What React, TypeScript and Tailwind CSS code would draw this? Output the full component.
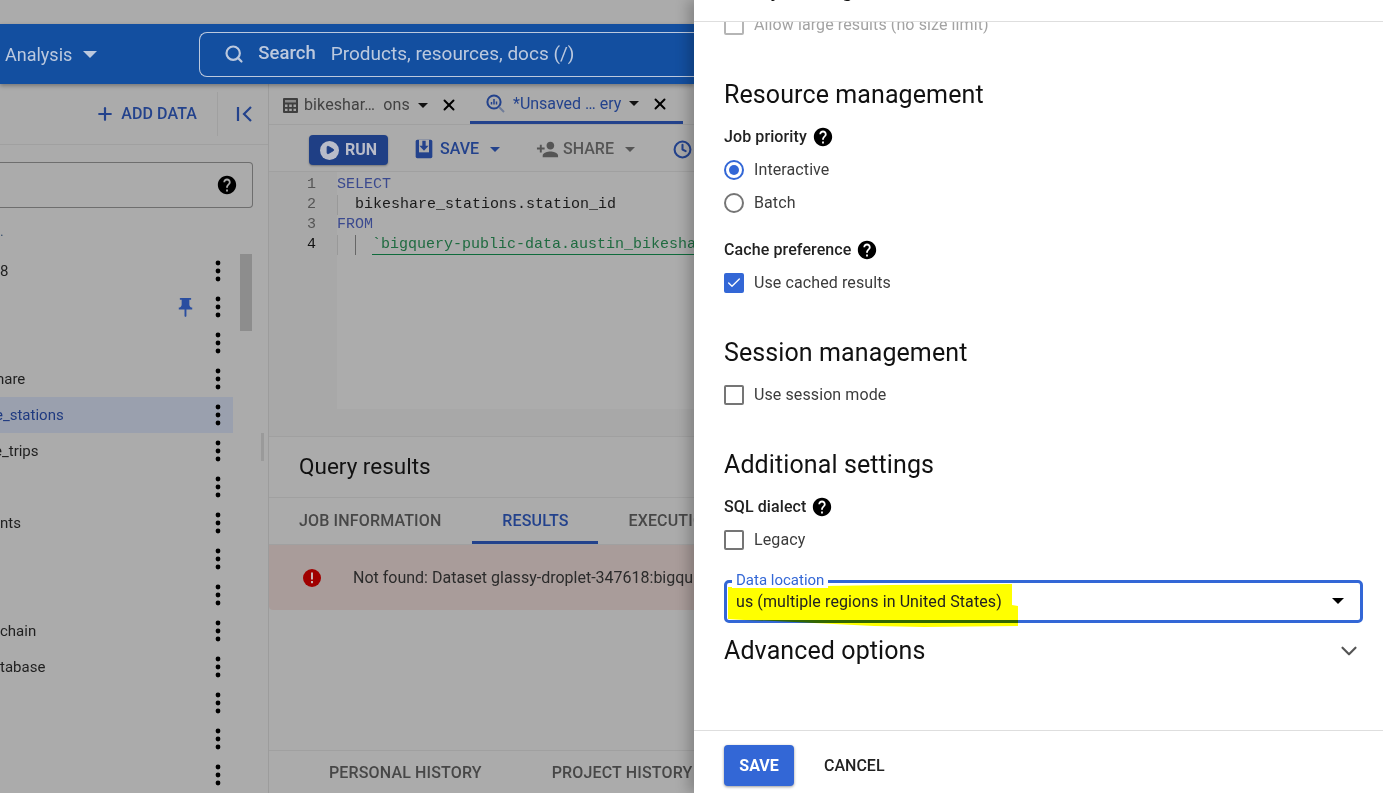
import { ChevronDown, Search, Plus, Play, Clock, X, Check } from 'lucide-react'

function HelpIcon({ size = 22 }: { size?: number }) {
  return (
    <svg width={size} height={size} viewBox="0 0 24 24" fill="#000" className="shrink-0">
      <path d="M12 2C6.48 2 2 6.48 2 12s4.48 10 10 10 10-4.48 10-10S17.52 2 12 2zm1 17h-2v-2h2v2zm2.07-7.75l-.9.92C13.45 12.9 13 13.5 13 15h-2v-.5c0-1.1.45-2.1 1.17-2.83l1.24-1.26c.37-.36.59-.86.59-1.41 0-1.1-.9-2-2-2s-2 .9-2 2H8c0-2.21 1.79-4 4-4s4 1.79 4 4c0 .88-.36 1.68-.93 2.25z" />
    </svg>
  )
}

function Dots() {
  return (
    <svg width="24" height="24" viewBox="0 0 24 24" fill="#000" className="shrink-0 mr-[3px]">
      <circle cx="12" cy="4" r="2.4" />
      <circle cx="12" cy="12" r="2.4" />
      <circle cx="12" cy="20" r="2.4" />
    </svg>
  )
}

function Caret({ className }: { className: string }) {
  return <span className={`inline-block w-0 h-0 border-x-[5px] border-x-transparent border-t-[5px] ${className}`} />
}

const sideRows = [
  { text: '8' },
  { text: '', pin: true },
  { text: '' },
  { text: 'hare', cut: '-ml-[4px]' },
  { text: 'e_stations', active: true, cut: '-ml-[5px]' },
  { text: 'e_trips', cut: '-ml-[6px]' },
  { text: '' },
  { text: 'nts' },
  { text: '' },
  { text: '' },
  { text: 'chain' },
  { text: 'tabase' },
  { text: '' },
  { text: '' },
  { text: '' },
]

function Sidebar() {
  return (
    <div className="w-[269px] shrink-0 flex flex-col border-r border-[#9c9c9c] overflow-hidden">
      <div className="h-[61px] shrink-0 flex items-center justify-end border-b border-[#a0a0a0]">
        <div className="flex items-center gap-[6px] text-[#23428c] text-[16px] font-medium mr-[20px] tracking-[0.1px]">
          <Plus size={20} strokeWidth={2.6} />
          <span>ADD DATA</span>
        </div>
        <div className="h-[44px] border-l border-[#a0a0a0] flex items-center pl-[17px] pr-[13px] text-[#23428c]">
          <svg width="20" height="20" viewBox="0 0 20 20" fill="none" stroke="currentColor" strokeWidth="2.2">
            <path d="M3 3v14M16 3l-7 7 7 7" />
          </svg>
        </div>
      </div>
      <div className="mt-[17px] h-[46px] w-[253px] shrink-0 border border-l-0 border-[#6e6e6e] rounded-r-[4px] flex items-center justify-end pr-[14px]">
        <HelpIcon />
      </div>
      <div className="h-[46px] shrink-0 text-[14px] text-[#3c5470] leading-[46px]">.</div>
      <div className="flex relative -mt-[1px]">
        <div className="w-[233px] shrink-0">
          {sideRows.map((r, i) => (
            <div key={i} className={`h-[36px] flex items-center overflow-hidden ${r.active ? 'bg-[#9aa0ae] text-[#1f3a80]' : 'text-[#1f1f1f]'}`}>
              <span className={`text-[15px] flex-1 ${r.cut ?? ''}`}>{r.text}</span>
              {r.pin && (
                <svg width="23" height="23" viewBox="0 0 24 24" fill="#2a4ea0" className="shrink-0 mr-[9px]">
                  <path d="M16 9V4h1c.55 0 1-.45 1-1s-.45-1-1-1H7c-.55 0-1 .45-1 1s.45 1 1 1h1v5c0 1.66-1.34 3-3 3v2h5.97v7l1 1 1-1v-7H19v-2c-1.66 0-3-1.34-3-3z" />
                </svg>
              )}
              <Dots />
            </div>
          ))}
        </div>
        <div className="w-[28px] shrink-0">
          <div className="ml-[7px] mt-[1px] w-[12px] h-[77px] bg-[#8d8d8d]" />
        </div>
        <div className="w-[7px] relative">
          <div className="absolute left-0 top-[180px] w-[3px] h-[28px] bg-[#9a9a9a]" />
        </div>
      </div>
    </div>
  )
}

function TabTableIcon() {
  return (
    <svg width="15" height="15" viewBox="0 0 15 15" className="shrink-0">
      <rect width="15" height="15" rx="1" fill="#3f3f3f" />
      <rect x="2" y="2" width="11" height="2.5" fill="#8a8a8a" />
      <path d="M2 6.5h2.5V9H2zM6.2 6.5h2.6V9H6.2zM10.5 6.5H13V9h-2.5zM2 10.7h2.5v2.3H2zM6.2 10.7h2.6v2.3H6.2zM10.5 10.7H13v2.3h-2.5z" fill="#a5a5a5" />
    </svg>
  )
}

function TabQueryIcon() {
  return (
    <svg width="19" height="19" viewBox="0 0 19 19" fill="none" className="shrink-0">
      <circle cx="8" cy="8" r="6.6" stroke="#23428c" strokeWidth="2" />
      <path d="M5.5 8v2.5M8 5v5.5M10.5 7.5v3" stroke="#23428c" strokeWidth="1.5" />
      <path d="M13 13l5 5" stroke="#6f7c99" strokeWidth="2" />
    </svg>
  )
}

function CodeLine({ n, children, strong }: { n: number; children: React.ReactNode; strong?: boolean }) {
  return (
    <div className="flex h-[20px]">
      <span className={`w-[49px] pr-[2px] shrink-0 text-right ${strong ? 'text-[#111]' : 'text-[#555]'}`}>{n}</span>
      <span className="ml-[19px] flex">{children}</span>
    </div>
  )
}

function MainPane() {
  return (
    <div className="flex-1 flex flex-col min-w-0 overflow-hidden">
      <div className="h-[41px] shrink-0 flex items-stretch border-b border-[#a0a0a0] whitespace-nowrap">
        <div className="w-[201px] shrink-0 flex items-center pl-[14px] pt-[2px] text-[#424242]">
          <TabTableIcon />
          <span className="ml-[6px] text-[16px] tracking-[0.1px]">bikeshar…&nbsp; ons</span>
          <Caret className="border-t-[#111] ml-[8px]" />
          <X size={18} strokeWidth={2.6} className="text-black ml-[12px]" />
        </div>
        <div className="w-[213px] shrink-0 flex items-center pl-[16px] pt-[2px] text-[#23428c] border-b-[3px] border-[#23428c]">
          <TabQueryIcon />
          <span className="ml-[8px] text-[16px]">*Unsaved … ery</span>
          <Caret className="border-t-[#111] ml-[8px]" />
          <X size={18} strokeWidth={2.6} className="text-black ml-[12px]" />
        </div>
      </div>
      <div className="h-[47px] shrink-0 flex items-center border-b border-[#a0a0a0] pl-[40px] pt-[2px] whitespace-nowrap text-[16px] font-medium">
        <div className="mt-[2px] h-[30px] w-[79px] rounded-[4px] bg-[#1f3f85] text-[#b9bcc9] flex items-center justify-center gap-[6px] font-bold shadow-[0_1px_2px_rgba(0,0,0,0.3)]">
          <span className="w-[19px] h-[19px] rounded-full bg-[#b9bcc9] flex items-center justify-center">
            <Play size={10} fill="#1f3f85" className="text-[#1f3f85] ml-[1px]" />
          </span>
          RUN
        </div>
        <svg width="20" height="20" viewBox="0 0 24 24" className="ml-[26px] shrink-0">
          <rect x="2" y="1" width="20" height="22" rx="2" fill="#23428c" />
          <rect x="6" y="1" width="12" height="15" fill="#ababab" />
          <path d="M10 2h4v6h3.5L12 14 6.500 8H10z" fill="#23428c" />
        </svg>
        <span className="ml-[6px] text-[#23428c]">SAVE</span>
        <Caret className="border-t-[#23428c] ml-[11px]" />
        <svg width="23" height="23" viewBox="0 0 24 24" fill="#555" className="ml-[36px] shrink-0">
          <path d="M15 12c2.21 0 4-1.79 4-4s-1.79-4-4-4-4 1.790-4 4 1.790 4 4 4zm-9-2V7H4v3H1v2h3v3h2v-3h3v-2H6zm9 4c-2.670 0-8 1.340-8 4v2h16v-2c0-2.660-5.330-4-8-4z" />
        </svg>
        <span className="ml-[4px] text-[#555]">SHARE</span>
        <Caret className="border-t-[#555] ml-[11px]" />
        <Clock size={19} strokeWidth={2.6} className="text-[#23428c] ml-[38px] shrink-0" />
      </div>
      <div className="h-[264px] shrink-0 relative bg-[#a8a8a8] font-['Liberation_Mono',monospace] text-[15px] leading-[20px] pt-[3px] whitespace-nowrap overflow-hidden">
        <div className="absolute left-[68px] right-0 top-0 h-[237px] bg-[#acacac]" />
        <div className="relative">
          <CodeLine n={1}><span className="text-[#3b4a8f]">SELECT</span></CodeLine>
          <CodeLine n={2}><span className="border-l border-[#999] pl-[17px] text-[#1a1a1a]">bikeshare_stations.station_id</span></CodeLine>
          <CodeLine n={3}><span className="text-[#3b4a8f]">FROM</span></CodeLine>
          <CodeLine n={4} strong>
            <span className="border-l border-[#999] pl-[17px] flex">
              <span className="border-l border-[#666] pl-[16px] flex">
                <span className="border-b border-[#0f6b3c] text-[#1f6b40] h-[20px]">`bigquery-public-data.austin_bikeshare</span>
              </span>
            </span>
          </CodeLine>
        </div>
      </div>
      <div className="h-[61px] shrink-0 flex items-center pl-[30px] border-t border-[#a0a0a0] text-[22.500px] text-[#111]">Query results</div>
      <div className="h-[48px] shrink-0 flex border-t border-b border-[#a0a0a0] text-[16px] font-medium tracking-[0.150px] whitespace-nowrap">
        <div className="pl-[30px] flex items-center text-[#474747] shrink-0">JOB INFORMATION</div>
        <div className="ml-[31px] w-[126px] shrink-0 flex items-center justify-center pt-[3px] text-[#23428c] border-b-[3px] border-[#23428c]">RESULTS</div>
        <div className="ml-[30px] flex items-center text-[#474747] shrink-0">EXECUTION DETAILS</div>
      </div>
      <div className="h-[65px] shrink-0 bg-[#a99c9a] rounded-bl-[4px] flex items-center pl-[33px] whitespace-nowrap">
        <svg width="20" height="20" viewBox="0 0 20 20" className="shrink-0">
          <circle cx="10" cy="10" r="9" fill="#a00000" />
          <rect x="9" y="4.5" width="2" height="7" fill="#c9b5b5" />
          <rect x="9" y="13" width="2" height="2.2" fill="#c9b5b5" />
        </svg>
        <span className="ml-[31px] text-[16px] text-[#2b2b2b]">Not found: Dataset glassy-droplet-347618:bigquery-public-data</span>
      </div>
      <div className="h-[140px] shrink-0" />
      <div className="flex-1 border-t border-[#a0a0a0] flex items-center text-[16px] font-medium tracking-[0.150px] text-[#474747] whitespace-nowrap pl-[60px] pt-[2px]">
        <span className="shrink-0">PERSONAL HISTORY</span>
        <span className="ml-[70px] shrink-0">PROJECT HISTORY</span>
      </div>
    </div>
  )
}

function CheckBox({ label, checked, dim }: { label: string; checked?: boolean; dim?: boolean }) {
  return (
    <div className="flex items-center gap-[10px] h-[20px]">
      <span className={`w-[20px] h-[20px] rounded-[2px] shrink-0 flex items-center justify-center border-2 ${checked ? 'bg-[#3367d6] border-[#3367d6]' : dim ? 'border-[#b5b5b5]' : 'border-[#757575]'}`}>
        {checked && <Check size={16} strokeWidth={2} className="text-white" />}
      </span>
      <span className={`text-[16px] tracking-[0.1px] ${dim ? 'text-[#a3a3a3]' : 'text-[#3c3c3c]'}`}>{label}</span>
    </div>
  )
}

function SettingsPanel() {
  const heading = 'text-[25px] leading-[32px] tracking-[0.1px] text-[#111]'
  const label = 'flex items-center gap-[5px] text-[16px] font-medium tracking-[0.1px] text-[#222] h-[20px]'
  return (
    <div className="w-[689px] shrink-0 bg-white flex flex-col h-full font-['Roboto',sans-serif] shadow-[-6px_0_12px_rgba(0,0,0,0.22)] relative">
      <div className="h-[22px] shrink-0 border-b border-[#dedede] overflow-hidden relative">
        <div className="absolute left-[30px] -top-[24px] text-[22px] leading-[26px] text-[#111] whitespace-nowrap">Query settings</div>
      </div>
      <div className="flex-1 min-h-0 overflow-hidden pl-[30px] pr-[20px]">
        <div className="-mt-[7px]"><CheckBox label="Allow large results (no size limit)" dim /></div>
        <h2 className={`mt-[44px] ${heading}`}>Resource management</h2>
        <div className={`mt-[16px] ${label}`}>Job priority <HelpIcon /></div>
        <div className="mt-[13px] flex items-center gap-[10px] h-[20px]">
          <span className="w-[20px] h-[20px] rounded-full border-2 border-[#3367d6] flex items-center justify-center"><span className="w-[10px] h-[10px] rounded-full bg-[#3367d6]" /></span>
          <span className="text-[16px] tracking-[0.1px] text-[#3c3c3c]">Interactive</span>
        </div>
        <div className="mt-[13px] flex items-center gap-[10px] h-[20px]">
          <span className="w-[20px] h-[20px] rounded-full border-2 border-[#757575]" />
          <span className="text-[16px] tracking-[0.1px] text-[#3c3c3c]">Batch</span>
        </div>
        <div className={`mt-[27px] ${label}`}>Cache preference <HelpIcon /></div>
        <div className="mt-[13px]"><CheckBox label="Use cached results" checked /></div>
        <h2 className={`mt-[44px] ${heading}`}>Session management</h2>
        <div className="mt-[16px]"><CheckBox label="Use session mode" /></div>
        <h2 className={`mt-[44px] ${heading}`}>Additional settings</h2>
        <div className={`mt-[16px] ${label}`}>SQL dialect <HelpIcon /></div>
        <div className="mt-[13px]"><CheckBox label="Legacy" /></div>
        <div className="relative mt-[30px] h-[43px] w-[639px] border-[3px] border-[#3367d6] rounded-[5px]">
          <svg width="300" height="50" className="absolute -left-[3px] -top-[3px] mix-blend-multiply">
            <polygon points="4,7 100,6 166,5 288,4 288,25 294,26 294,46 200,47 150,46 90,43 50,41 20,40 4,39" fill="#ffff00" />
          </svg>
          <span className="absolute left-[5px] -top-[11px] bg-white px-[4px] text-[15px] leading-[16px] text-[#3367d6] whitespace-nowrap">Data location</span>
          <span className="absolute left-[9px] top-[9px] text-[16px] leading-[20px] tracking-[0.1px] text-[#222] whitespace-nowrap">us (multiple regions in United States)</span>
          <Caret className="absolute right-[16px] top-[15px] border-t-black border-x-[6px] border-t-[6px]" />
        </div>
        <div className="mt-[12px] flex items-center justify-between w-[639px] h-[32px]">
          <h2 className={heading}>Advanced options</h2>
          <ChevronDown size={26} strokeWidth={2} className="text-[#555] mr-[1px]" />
        </div>
      </div>
      <div className="h-[63px] shrink-0 border-t border-[#dedede] flex items-start pt-[14px] pl-[30px]">
        <button className="h-[41px] w-[70px] rounded-[4px] bg-[#3367d6] text-white text-[16px] font-bold shadow-[0_1px_3px_rgba(0,0,0,0.4)]">SAVE</button>
        <button className="ml-[30px] h-[41px] text-[16px] font-medium text-[#222]">CANCEL</button>
      </div>
    </div>
  )
}

export default function App() {
  return (
    <div className="flex h-[793px] w-[1383px] overflow-hidden bg-[#ababab] font-['Roboto',sans-serif]">
      <div className="w-[694px] shrink-0 flex flex-col">
        <div className="h-[24px] shrink-0 bg-[#ababab]" />
        <div className="h-[60px] shrink-0 bg-[#134fa0] flex items-center text-[#bcc9de] shadow-[0_2px_4px_rgba(0,0,0,0.3)] relative">
          <span className="ml-[5px] text-[18px]">Analysis</span>
          <Caret className="border-t-[#bcc9de] ml-[11px] border-x-[7px] border-t-[7px]" />
          <div className="ml-[102px] flex-1 h-[45px] border border-r-0 border-[#bcc9de] rounded-l-[8px] flex items-center pl-[24px] whitespace-nowrap overflow-hidden">
            <Search size={20} strokeWidth={2.6} />
            <span className="ml-[14px] text-[18.500px] font-medium">Search</span>
            <span className="ml-[15px] text-[19px]">Products, resources, docs (/)</span>
          </div>
        </div>
        <div className="flex-1 flex min-h-0">
          <Sidebar />
          <MainPane />
        </div>
      </div>
      <SettingsPanel />
    </div>
  )
}
